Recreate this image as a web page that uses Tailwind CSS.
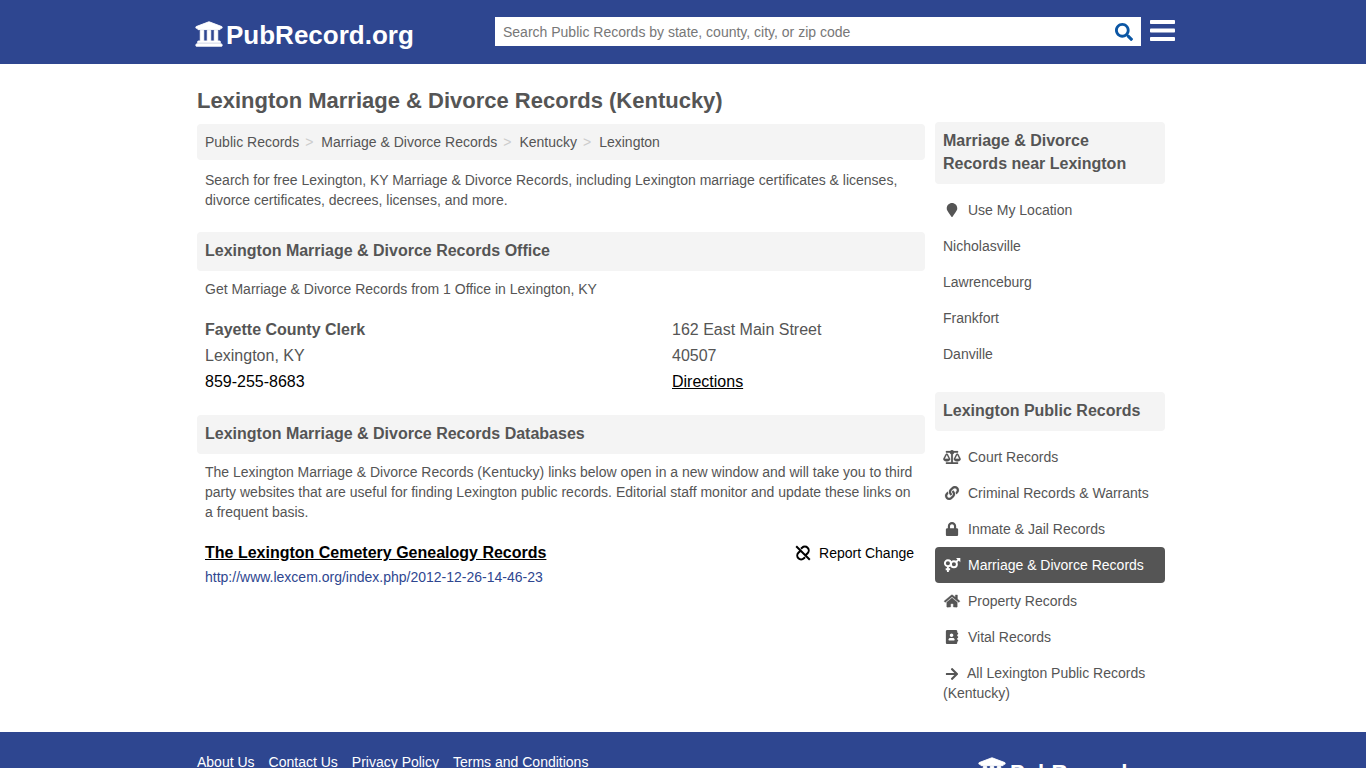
<!DOCTYPE html>
<html lang="en">
<head>
    <meta charset="UTF-8">
    <meta name="viewport" content="width=device-width, initial-scale=1.0">
    <title>Lexington Marriage &amp; Divorce Records (Kentucky)</title>
    <script src="https://cdn.jsdelivr.net/npm/@tailwindcss/browser@4"></script>
</head>
<body class="bg-white font-['Liberation_Sans',Arial,sans-serif] text-sm leading-5 text-[#555]">
    <!-- Icons used more than once -->
    <svg class="hidden">
        <symbol id="university" viewBox="0 0 512 512"><path stroke="currentColor" stroke-width="16" d="M496 128v16a8 8 0 0 1-8 8h-24v12c0 6.627-5.373 12-12 12H60c-6.627 0-12-5.373-12-12v-12H24a8 8 0 0 1-8-8v-16a8 8 0 0 1 4.941-7.392l232-88a7.996 7.996 0 0 1 6.118 0l232 88A8 8 0 0 1 496 128zm-24 304H40c-13.255 0-24 10.745-24 24v16a8 8 0 0 0 8 8h464a8 8 0 0 0 8-8v-16c0-13.255-10.745-24-24-24zM96 192v192H60c-6.627 0-12 5.373-12 12v20h416v-20c0-6.627-5.373-12-12-12h-36V192h-64v192h-64V192h-64v192h-64V192H96z"/></symbol>
    </svg>

    <!-- Header -->
    <header class="bg-[#2e4690]">
        <div class="max-w-[992px] h-16 mx-auto pl-2 pr-1 flex items-start">
            <a href="#" class="flex items-center pt-5 text-white">
                <svg class="w-7 h-7 -mt-0.5" fill="currentColor" aria-hidden="true"><use href="#university"/></svg>
                <span class="pl-[3px] text-[26px] leading-[30px] font-bold">PubRecord.org</span>
            </a>
            <form class="ml-auto mt-4 pt-px flex">
                <input id="search" type="text" aria-label="Search Public Records" placeholder="Search Public Records by state, county, city, or zip code" class="w-[612px] h-[29px] bg-white px-2 text-sm placeholder:text-[#777] outline-none">
                <button type="submit" aria-label="Search" class="w-[34px] h-[29px] bg-white flex items-center justify-center">
                    <svg class="w-[18px] h-[18px]" viewBox="0 0 512 512" fill="#0b56a4"><path d="M505 442.7L405.3 343c-4.5-4.5-10.6-7-17-7H372c27.6-35.3 44-79.7 44-128C416 93.1 322.9 0 208 0S0 93.1 0 208s93.1 208 208 208c48.3 0 92.7-16.4 128-44v16.3c0 6.4 2.5 12.5 7 17l99.7 99.7c9.4 9.4 24.6 9.4 33.9 0l28.3-28.3c9.4-9.4 9.4-24.6.1-34zM208 336c-70.7 0-128-57.2-128-128 0-70.7 57.2-128 128-128 70.7 0 128 57.2 128 128 0 70.7-57.2 128-128 128z"/></svg>
                </button>
            </form>
            <button type="button" aria-label="Menu" class="ml-[9px] mt-[18px]">
                <svg class="w-[25px] h-6" viewBox="0 0 25 24" fill="#fff"><rect y="2" width="25" height="4" rx="0.8"/><rect y="10.500" width="25" height="4" rx="0.8"/><rect y="19" width="25" height="4" rx="0.8"/></svg>
            </button>
        </div>
    </header>

    <div class="max-w-[980px] mx-auto pl-1 pr-2 pb-[21px] flex gap-[10px]">
        <!-- Main column -->
        <main class="flex-1">
            <h1 class="mt-[25px] mb-[11px] text-[22px] leading-6 font-bold">Lexington Marriage &amp; Divorce Records (Kentucky)</h1>
            <nav class="bg-[#f4f4f4] rounded-sm p-2 flex" aria-label="Breadcrumb">
                <a href="#">Public Records</a><span class="pl-1.5 pr-2 text-[#ccc]">&gt;</span>
                <a href="#">Marriage &amp; Divorce Records</a><span class="pl-1.5 pr-2 text-[#ccc]">&gt;</span>
                <a href="#">Kentucky</a><span class="pl-1.5 pr-2 text-[#ccc]">&gt;</span>
                <a href="#">Lexington</a>
            </nav>
            <p class="px-2 pt-[10px] pb-[22px]">Search for free Lexington, KY Marriage &amp; Divorce Records, including Lexington marriage certificates &amp; licenses, divorce certificates, decrees, licenses, and more.</p>

            <h2 class="bg-[#f4f4f4] rounded-sm p-2 pt-[7px] text-base leading-6 font-bold">Lexington Marriage &amp; Divorce Records Office</h2>
            <p class="p-2">Get Marriage &amp; Divorce Records from 1 Office in Lexington, KY</p>
            <div class="px-2 pt-[10px] pb-5 flex text-base leading-[26px]">
                <div class="w-[467px]">
                    <strong class="block">Fayette County Clerk</strong>
                    <span class="block">Lexington, KY</span>
                    <a href="tel:859-255-8683" class="text-black">859-255-8683</a>
                </div>
                <div>
                    <span class="block">162 East Main Street</span>
                    <span class="block">40507</span>
                    <a href="#" class="text-black underline">Directions</a>
                </div>
            </div>

            <h2 class="bg-[#f4f4f4] rounded-sm p-2 pt-[7px] text-base leading-6 font-bold">Lexington Marriage &amp; Divorce Records Databases</h2>
            <p class="p-2">The Lexington Marriage &amp; Divorce Records (Kentucky) links below open in a new window and will take you to third party websites that are useful for finding Lexington public records. Editorial staff monitor and update these links on a frequent basis.</p>
            <div class="px-2 pt-[11px] flex justify-between">
                <div>
                    <a href="#" class="block pb-0.5 text-base leading-6 font-bold text-black underline">The Lexington Cemetery Genealogy Records</a>
                    <a href="#" class="text-[#2e4690]">http://www.lexcem.org/index.php/2012-12-26-14-46-23</a>
                </div>
                <button type="button" class="h-6 pr-[3px] flex items-center gap-2 text-black">
                    <svg class="w-4 h-4" viewBox="0 0 16 16" fill="none" stroke="#000" stroke-width="2"><path d="M1.200 1.200l13.600 13.600M6 3.800l1.100-1.100a3.900 3.900 0 0 1 5.500 0 3.900 3.900 0 0 1 0 5.500l-1.600 1.600M10 12.200l-1.100 1.100a3.900 3.900 0 0 1-5.500 0 3.900 3.900 0 0 1 0-5.500L5 6.200"/></svg>
                    Report Change
                </button>
            </div>
        </main>

        <!-- Sidebar -->
        <aside class="w-[230px] pt-[58px]">
            <h3 class="bg-[#f4f4f4] rounded-sm px-2 pt-[7px] pb-[9px] text-base leading-[23px] font-bold">Marriage &amp; Divorce Records near Lexington</h3>
            <ul class="pt-2 pb-5">
                <li><a href="#" class="flex items-center p-2"><svg class="w-[18px] h-[14px] mr-[7px]" viewBox="0 0 384 512" fill="currentColor"><path d="M172.268 501.67C26.97 291.031 0 269.413 0 192 0 85.961 85.961 0 192 0s192 85.961 192 192c0 77.413-26.97 99.031-172.268 309.67-9.535 13.774-29.93 13.773-39.464 0z"/></svg>Use My Location</a></li>
                <li><a href="#" class="block p-2">Nicholasville</a></li>
                <li><a href="#" class="block p-2">Lawrenceburg</a></li>
                <li><a href="#" class="block p-2">Frankfort</a></li>
                <li><a href="#" class="block p-2">Danville</a></li>
            </ul>

            <h3 class="bg-[#f4f4f4] rounded-sm p-2 pt-[7px] text-base leading-6 font-bold">Lexington Public Records</h3>
            <ul class="pt-2">
                <li><a href="#" class="flex items-center p-2"><svg class="w-[18px] h-[14px] mr-[7px]" viewBox="0 0 640 512" fill="currentColor" stroke="currentColor" stroke-width="6"><path d="M256 336h-.02c0-16.18 1.34-8.73-85.05-181.51-17.65-35.29-68.19-35.36-85.87 0C-2.06 328.75.02 320.33.02 336H0c0 44.18 57.31 80 128 80s128-35.82 128-80zM128 176l72 144H56l72-144zm511.98 160c0-16.18 1.34-8.73-85.05-181.51-17.65-35.29-68.19-35.36-85.87 0-87.12 174.26-85.04 165.84-85.04 181.51H384c0 44.18 57.31 80 128 80s128-35.82 128-80h-.02zM440 320l72-144 72 144H440zm88 128H352V153.250c23.510-10.290 41.160-31.480 46.390-57.250H528c8.840 0 16-7.160 16-16V48c0-8.840-7.160-16-16-16H383.640C369.040 12.680 346.090 0 320 0s-49.040 12.680-63.640 32H112c-8.840 0-16 7.160-16 16v32c0 8.840 7.160 16 16 16h129.610c5.230 25.760 22.870 46.960 46.390 57.250V448H112c-8.840 0-16 7.160-16 16v32c0 8.840 7.160 16 16 16h416c8.840 0 16-7.160 16-16v-32c0-8.840-7.160-16-16-16z"/></svg>Court Records</a></li>
                <li><a href="#" class="flex items-center p-2"><svg class="w-[18px] h-[14px] mr-[7px]" viewBox="0 0 512 512" fill="currentColor" stroke="currentColor" stroke-width="6"><path d="M326.612 185.391c59.747 59.809 58.927 155.698.36 214.59-.11.12-.24.25-.36.37l-67.2 67.2c-59.27 59.27-155.699 59.262-214.96 0-59.27-59.26-59.27-155.7 0-214.96l37.106-37.106c9.84-9.84 26.786-3.3 27.294 10.606.648 17.722 3.826 35.527 9.69 52.721 1.986 5.822.567 12.262-3.783 16.612l-13.087 13.087c-28.026 28.026-28.905 73.66-1.155 101.96 28.024 28.579 74.086 28.749 102.325.51l67.2-67.19c28.191-28.191 28.073-73.757 0-101.83-3.701-3.694-7.429-6.564-10.341-8.569a16.037 16.037 0 0 1-6.947-12.606c-.396-10.567 3.348-21.456 11.698-29.806l21.054-21.055c5.521-5.521 14.182-6.199 20.584-1.731a152.482 152.482 0 0 1 20.522 17.197zM467.547 44.449c-59.261-59.262-155.69-59.27-214.96 0l-67.2 67.2c-.12.12-.25.25-.36.37-58.566 58.892-59.387 154.781.36 214.59a152.454 152.454 0 0 0 20.521 17.196c6.402 4.468 15.064 3.789 20.584-1.731l21.054-21.055c8.35-8.35 12.094-19.239 11.698-29.806a16.037 16.037 0 0 0-6.947-12.606c-2.912-2.005-6.64-4.875-10.341-8.569-28.073-28.073-28.191-73.639 0-101.83l67.2-67.19c28.239-28.239 74.3-28.069 102.325.51 27.75 28.3 26.872 73.934-1.155 101.96l-13.087 13.087c-4.35 4.35-5.769 10.79-3.783 16.612 5.864 17.194 9.042 34.999 9.69 52.721.509 13.906 17.454 20.446 27.294 10.606l37.106-37.106c59.271-59.259 59.271-155.699.001-214.959z"/></svg>Criminal Records &amp; Warrants</a></li>
                <li><a href="#" class="flex items-center p-2"><svg class="w-[18px] h-[14px] mr-[7px]" viewBox="0 0 448 512" fill="currentColor"><path d="M400 224h-24v-72C376 68.2 307.8 0 224 0S72 68.2 72 152v72H48c-26.5 0-48 21.5-48 48v192c0 26.5 21.5 48 48 48h352c26.5 0 48-21.5 48-48V272c0-26.5-21.5-48-48-48zm-104 0H152v-72c0-39.7 32.3-72 72-72s72 32.3 72 72v72z"/></svg>Inmate &amp; Jail Records</a></li>
                <li><a href="#" class="flex items-center p-2 rounded-sm bg-[#555] text-white"><svg class="w-[18px] h-[14px] mr-[7px]" viewBox="0 0 18 14" fill="none" stroke="currentColor" stroke-width="1.9"><circle cx="4.900" cy="5.300" r="3"/><path d="M4.900 8.300V14M2.700 11.300h4.400"/><circle cx="10.900" cy="6.300" r="3"/><path d="M13 4.200L15.800 1.400"/><path d="M13 0H17.300V4.300z" fill="currentColor" stroke="none"/></svg>Marriage &amp; Divorce Records</a></li>
                <li><a href="#" class="flex items-center p-2"><svg class="w-[18px] h-[14px] mr-[7px]" viewBox="0 0 576 512" fill="currentColor" stroke="currentColor" stroke-width="12"><path d="M280.37 148.26L96 300.11V464a16 16 0 0 0 16 16l112.06-.29a16 16 0 0 0 15.92-16V368a16 16 0 0 1 16-16h64a16 16 0 0 1 16 16v95.64a16 16 0 0 0 16 16.05L464 480a16 16 0 0 0 16-16V300L295.67 148.26a12.19 12.19 0 0 0-15.3 0zM571.6 251.47L488 182.56V44.05a12 12 0 0 0-12-12h-56a12 12 0 0 0-12 12v72.61L318.47 43a48 48 0 0 0-61 0L4.34 251.47a12 12 0 0 0-1.6 16.9l25.5 31A12 12 0 0 0 45.15 301l235.22-193.74a12.19 12.19 0 0 1 15.3 0L530.9 301a12 12 0 0 0 16.9-1.6l25.5-31a12 12 0 0 0-1.7-16.93z"/></svg>Property Records</a></li>
                <li><a href="#" class="flex items-center p-2"><svg class="w-[18px] h-[14px] mr-[7px]" viewBox="0 0 448 512" fill="currentColor"><path d="M436 160c6.6 0 12-5.4 12-12v-40c0-6.6-5.4-12-12-12h-20V48c0-26.5-21.5-48-48-48H48C21.5 0 0 21.5 0 48v416c0 26.5 21.5 48 48 48h320c26.5 0 48-21.5 48-48v-48h20c6.6 0 12-5.4 12-12v-40c0-6.6-5.4-12-12-12h-20v-64h20c6.6 0 12-5.4 12-12v-40c0-6.6-5.4-12-12-12h-20v-64h20zm-228-32c35.3 0 64 28.7 64 64s-28.7 64-64 64-64-28.7-64-64 28.7-64 64-64zm112 236.8c0 10.6-10 19.2-22.4 19.2H118.4C106 384 96 375.4 96 364.8v-19.2c0-31.8 30.1-57.6 67.2-57.6h5c12.3 5.1 25.7 8 39.8 8s27.6-2.9 39.8-8h5c37.1 0 67.2 25.8 67.2 57.6v19.2z"/></svg>Vital Records</a></li>
                <li><a href="#" class="block p-2"><svg class="inline w-[18px] h-[14px] mr-[6px]" viewBox="0 0 448 512" fill="currentColor"><path d="M190.5 66.9l22.2-22.2c9.4-9.4 24.6-9.4 33.9 0L441 239c9.4 9.4 9.4 24.6 0 33.9L246.6 467.3c-9.4 9.4-24.6 9.4-33.9 0l-22.2-22.2c-9.5-9.5-9.3-25 .4-34.3L311.4 296H24c-13.3 0-24-10.7-24-24v-32c0-13.3 10.7-24 24-24h287.4L190.9 101.2c-9.8-9.3-10-24.8-.4-34.3z"/></svg>All Lexington Public Records (Kentucky)</a></li>
            </ul>
        </aside>
    </div>

    <!-- Footer -->
    <footer class="bg-[#2e4690] pb-5 text-white">
        <div class="max-w-[980px] mx-auto pl-1 pr-2 flex justify-between">
            <nav class="pt-5 flex gap-[14px]">
                <a href="#">About Us</a>
                <a href="#">Contact Us</a>
                <a href="#">Privacy Policy</a>
                <a href="#">Terms and Conditions</a>
            </nav>
            <a href="#" class="w-[187px] pt-6 flex items-start">
                <svg class="w-7 h-7 shrink-0" fill="currentColor" aria-hidden="true"><use href="#university"/></svg>
                <span class="pl-1 pt-[3px] text-[22px] leading-7 font-bold">PubRecord.org</span>
            </a>
        </div>
    </footer>
</body>
</html>
